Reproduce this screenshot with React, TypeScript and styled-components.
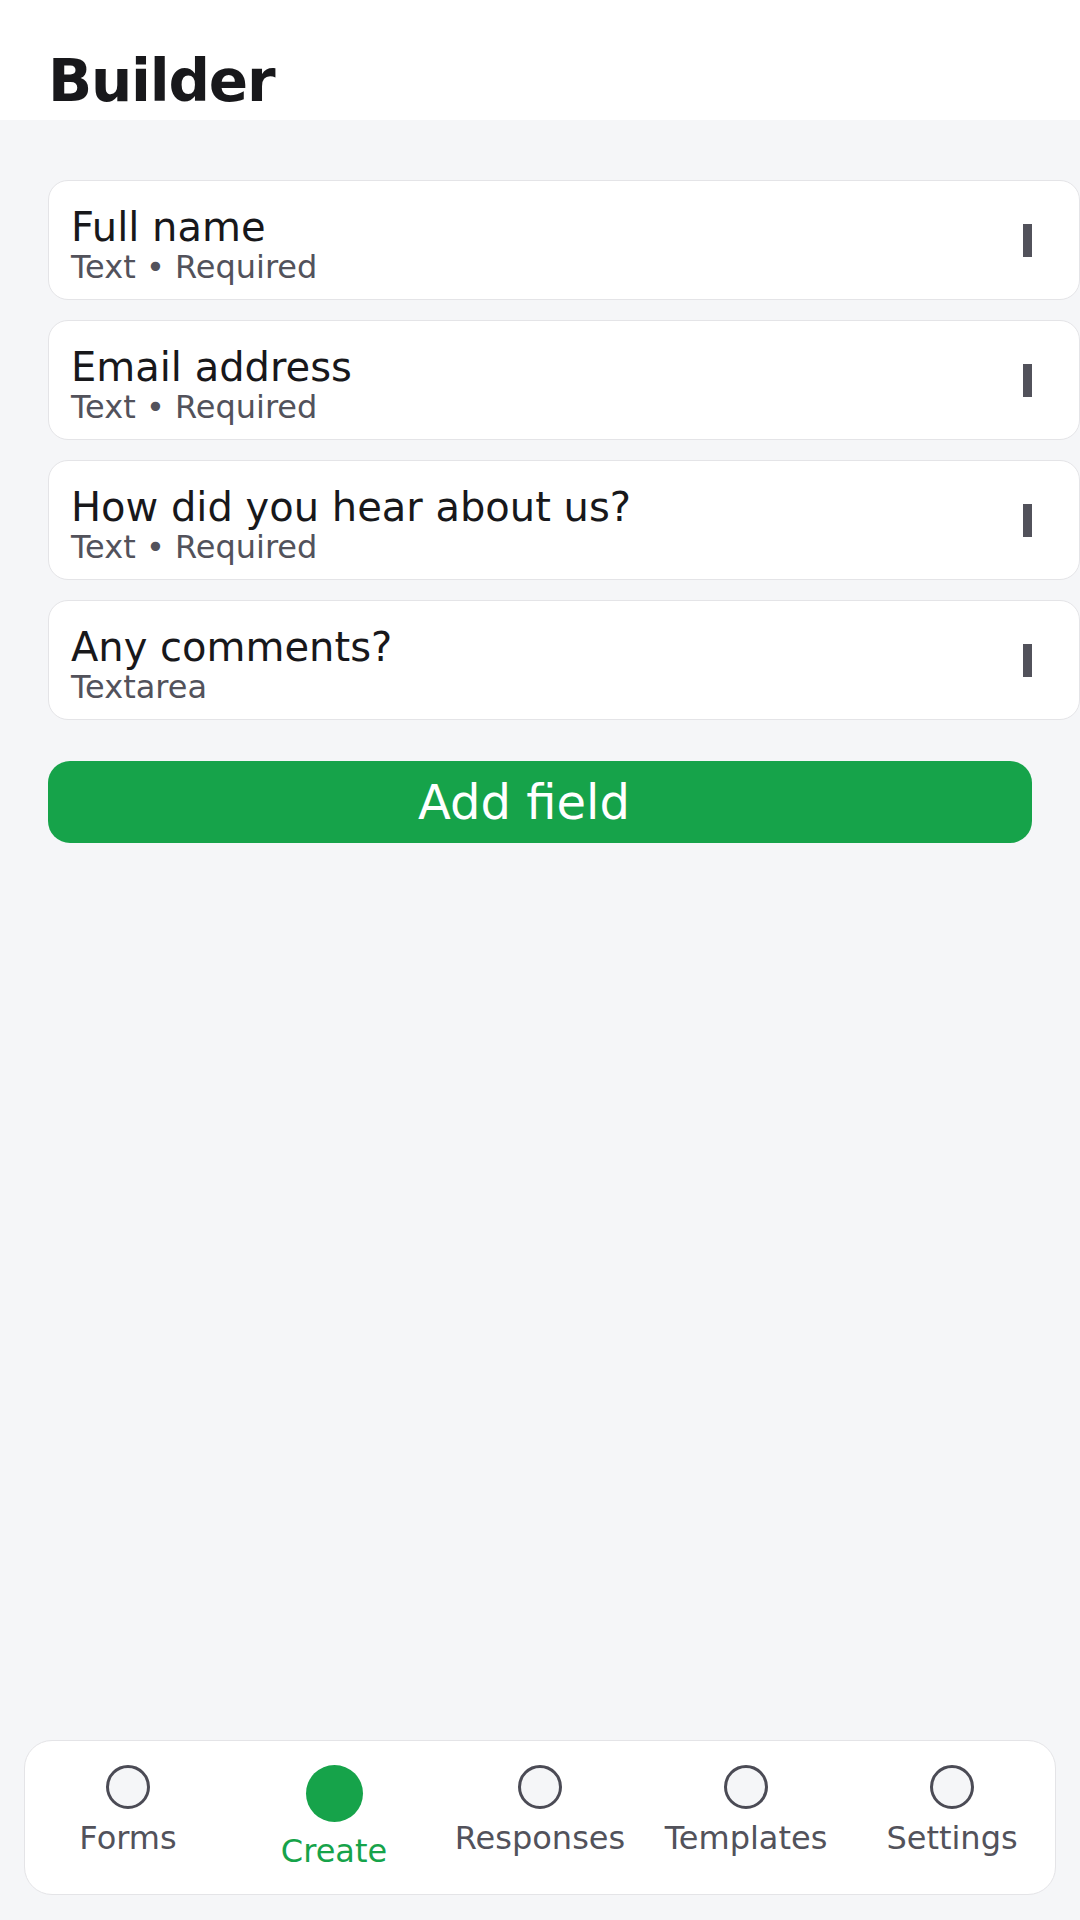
import React from "react";
import styled, { createGlobalStyle } from "styled-components";

const GlobalStyle = createGlobalStyle`
  html, body {
    margin: 0;
    padding: 0;
    background: #f5f6f8;
  }
  * { box-sizing: border-box; }
  body {
    font-family: "DejaVu Sans", "Noto Sans", sans-serif;
  }
`;

const Page = styled.div`
  display: flex;
  flex-direction: column;
  min-height: 100vh;
  background: #f5f6f8;
`;

const Header = styled.header`
  height: 120px;
  background: #ffffff;
  padding: 47px 48px 0;
`;

const Title = styled.h1`
  margin: 0;
  font-size: 58px;
  line-height: normal;
  font-weight: 700;
  letter-spacing: -1.2px;
  color: #18181b;
`;

const Main = styled.main`
  flex: 1;
  padding: 60px 48px 0;
  display: flex;
  flex-direction: column;
`;

const FieldList = styled.div`
  display: flex;
  flex-direction: column;
  gap: 20px;
`;

const FieldCard = styled.div`
  width: calc(100% + 48px);
  height: 120px;
  background: #ffffff;
  border: 1px solid #e4e4e7;
  border-radius: 20px;
  padding: 23px 47px 0 22px;
  display: flex;
  align-items: flex-start;
  justify-content: space-between;
`;

const FieldText = styled.div`
  display: flex;
  flex-direction: column;
`;

const FieldLabel = styled.div`
  font-size: 40px;
  line-height: normal;
  color: #18181b;
`;

const FieldMeta = styled.div`
  font-size: 32px;
  line-height: 35px;
  color: #52525b;
`;

const Handle = styled.div`
  width: 9px;
  height: 33px;
  background: #52525b;
  align-self: center;
  margin-top: -23px;
`;

const AddButton = styled.button`
  margin-top: 41px;
  height: 82px;
  width: 100%;
  border: none;
  border-radius: 22px;
  background: #16a34a;
  color: #ffffff;
  font-family: "DejaVu Sans", "Noto Sans", sans-serif;
  font-size: 48px;
  padding: 0 32px 0 0;
  display: flex;
  align-items: center;
  justify-content: center;
  cursor: pointer;
`;

const Nav = styled.nav`
  margin: 0 24px 25px;
  height: 155px;
  background: #ffffff;
  border: 1px solid #e4e4e7;
  border-radius: 28px;
  display: flex;
  padding-top: 24px;
`;

const NavItem = styled.div`
  flex: 1;
  display: flex;
  flex-direction: column;
  align-items: center;
  gap: 10px;
`;

const NavDot = styled.div<{ $active?: boolean }>`
  width: ${(p) => (p.$active ? "57px" : "44px")};
  height: ${(p) => (p.$active ? "57px" : "44px")};
  border-radius: 50%;
  background: ${(p) => (p.$active ? "#16a34a" : "#f5f6f8")};
  border: ${(p) => (p.$active ? "none" : "3px solid #4b4b55")};
`;

const NavLabel = styled.div<{ $active?: boolean }>`
  font-size: 32px;
  line-height: normal;
  color: ${(p) => (p.$active ? "#16a34a" : "#52525b")};
`;

const fields = [
  { label: "Full name", meta: "Text • Required" },
  { label: "Email address", meta: "Text • Required" },
  { label: "How did you hear about us?", meta: "Text • Required" },
  { label: "Any comments?", meta: "Textarea" },
];

const tabs = ["Forms", "Create", "Responses", "Templates", "Settings"];

export default function App() {
  return (
    <>
      <GlobalStyle />
      <Page>
        <Header>
          <Title>Builder</Title>
        </Header>
        <Main>
          <FieldList>
            {fields.map((f) => (
              <FieldCard key={f.label}>
                <FieldText>
                  <FieldLabel>{f.label}</FieldLabel>
                  <FieldMeta>{f.meta}</FieldMeta>
                </FieldText>
                <Handle />
              </FieldCard>
            ))}
          </FieldList>
          <AddButton>Add field</AddButton>
        </Main>
        <Nav>
          {tabs.map((t) => (
            <NavItem key={t}>
              <NavDot $active={t === "Create"} />
              <NavLabel $active={t === "Create"}>{t}</NavLabel>
            </NavItem>
          ))}
        </Nav>
      </Page>
    </>
  );
}
